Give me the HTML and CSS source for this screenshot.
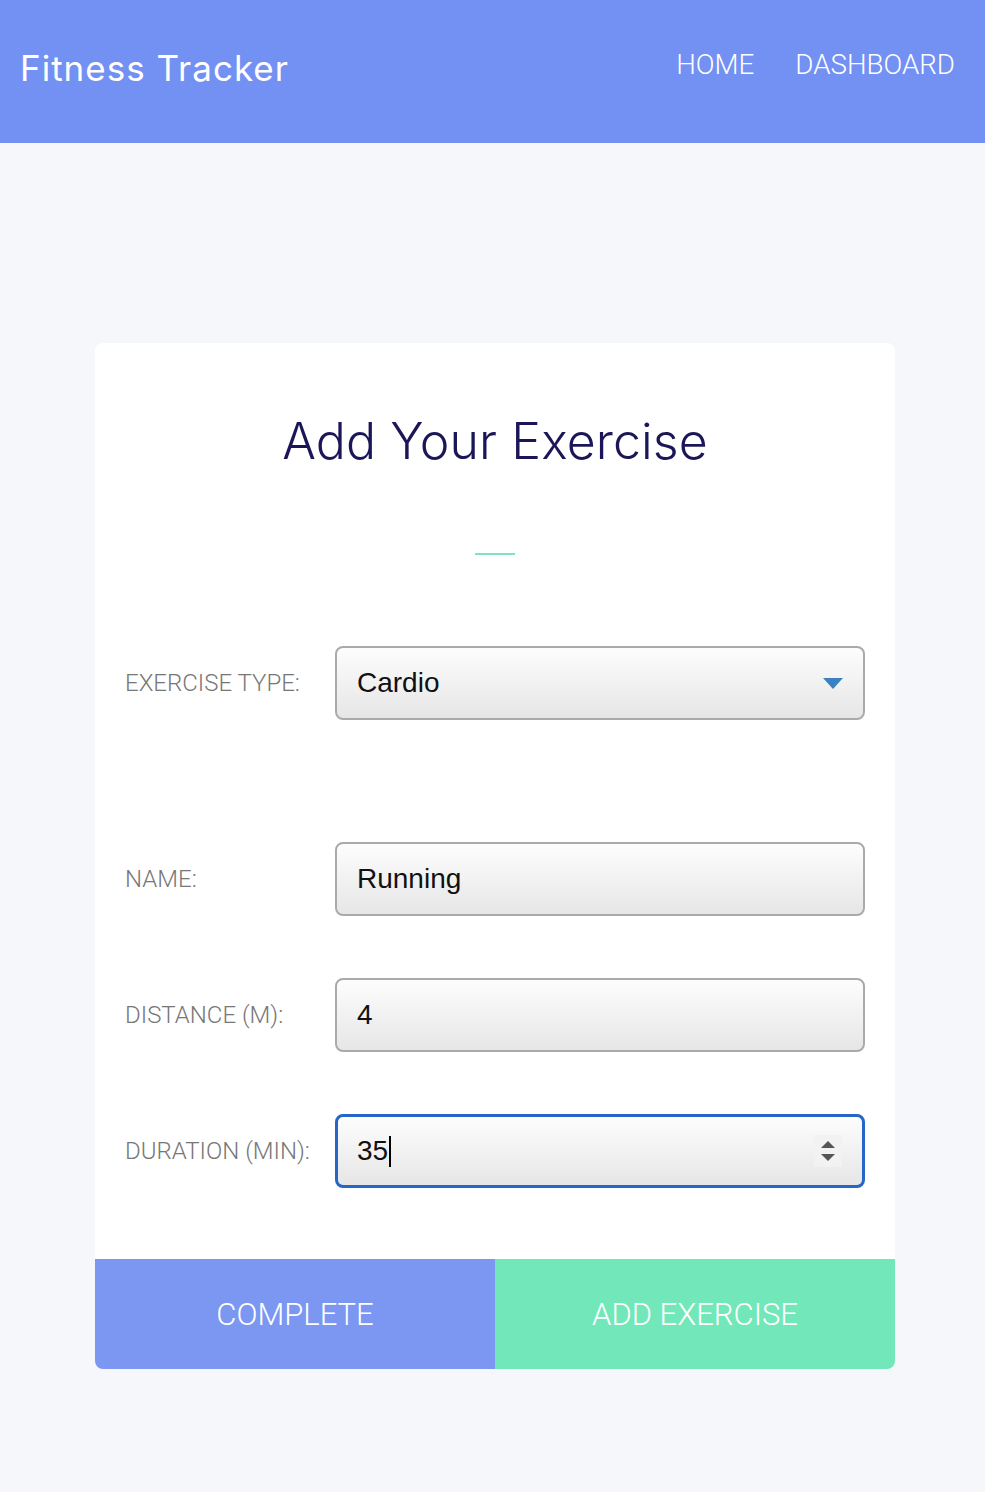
FILE: index.html
```html
<!DOCTYPE html>
<html>
<head>
<meta charset="utf-8">
<link rel="stylesheet" href="styles.css">
</head>
<body>
<header class="topbar">
  <div class="brand">Fitness Tracker</div>
  <nav class="nav">
    <a class="nav-link">HOME</a>
    <a class="nav-link">DASHBOARD</a>
  </nav>
</header>
<main class="page">
  <section class="card">
    <h1 class="card-title">Add Your Exercise</h1>
    <div class="divider"></div>
    <div class="form">
      <div class="row row-type">
        <div class="label">EXERCISE TYPE:</div>
        <div class="field">
          <span class="value">Cardio</span>
          <svg class="arrow" width="20" height="11" viewBox="0 0 20 11"><path d="M0 0 L20 0 L10 11 Z" fill="#3b80c0"/></svg>
        </div>
      </div>
      <div class="row row-name">
        <div class="label">NAME:</div>
        <div class="field"><span class="value">Running</span></div>
      </div>
      <div class="row">
        <div class="label">DISTANCE (M):</div>
        <div class="field"><span class="value">4</span></div>
      </div>
      <div class="row">
        <div class="label">DURATION (MIN):</div>
        <div class="field focused">
          <span class="value">35</span><span class="caret"></span>
          <span class="spinner">
            <svg width="16" height="24" viewBox="0 0 16 24"><path d="M1 9 L8 2 L15 9 Z" fill="#555"/><path d="M1 15 L15 15 L8 22 Z" fill="#555"/></svg>
          </span>
        </div>
      </div>
    </div>
    <div class="actions">
      <button class="btn btn-complete">COMPLETE</button>
      <button class="btn btn-add">ADD EXERCISE</button>
    </div>
  </section>
</main>
</body>
</html>
```
FILE: styles.css
```css
* { box-sizing: border-box; }
html, body { margin: 0; padding: 0; }
body {
  background: #f6f7fb;
  font-family: Roboto, "Liberation Sans", sans-serif;
  min-height: 1492px;
}
.topbar {
  height: 143px;
  background: #7390f3;
  display: flex;
  justify-content: space-between;
  align-items: flex-start;
  padding: 0 30px 0 20px;
}
.brand {
  color: #fff;
  font-family: Inter, "Noto Sans", sans-serif;
  font-weight: 400;
  font-size: 35px;
  letter-spacing: 1px;
  margin-top: 45px;
  line-height: 46px;
}
.nav {
  display: flex;
  gap: 41px;
  margin-top: 45px;
}
.nav-link {
  color: #fff;
  font-family: Roboto, sans-serif;
  font-weight: 300;
  font-size: 27.7px;
  line-height: 40px;
}
.page {
  padding-top: 200px;
  padding-left: 5px;
  display: flex;
  justify-content: center;
}
.card {
  width: 800px;
  background: #fff;
  border-radius: 8px;
  overflow: hidden;
}
.card-title {
  margin: 0;
  padding-top: 68px;
  text-align: center;
  font-family: Inter, "Noto Sans", sans-serif;
  font-weight: 300;
  font-size: 50px;
  line-height: 60px;
  color: #1b1657;
  letter-spacing: 0.1px;
}
.divider {
  width: 40px;
  height: 2px;
  background: #7fe3bc;
  margin: 82px auto 0;
}
.form {
  padding: 91px 30px 71px 30px;
  display: flex;
  flex-direction: column;
  gap: 62px;
}
.row {
  display: flex;
  align-items: center;
}
.row-name { margin-top: 60px; }
.label {
  width: 210px;
  color: #777;
  font-family: Roboto, sans-serif;
  font-weight: 300;
  font-size: 24px;
}
.field {
  width: 530px;
  height: 74px;
  border: 2px solid #aaa;
  border-radius: 8px;
  background: linear-gradient(#fdfdfd, #e6e6e6);
  display: flex;
  align-items: center;
  padding: 0 20px;
  position: relative;
}
.value {
  font-family: "Liberation Sans", Arial, sans-serif;
  font-size: 28px;
  color: #111;
}
.arrow { margin-left: auto; }
.focused {
  border: 3px solid #2566c8;
  padding-left: 19px;
}
.caret {
  width: 2px;
  height: 31px;
  background: #000;
  margin-left: 1px;
}
.spinner {
  position: absolute;
  right: 20px;
  top: 18px;
  width: 28px;
  height: 32px;
  background: #f2f2f2;
  display: flex;
  align-items: center;
  justify-content: center;
}
.actions {
  display: flex;
  height: 110px;
}
.btn {
  flex: 1;
  border: none;
  margin: 0;
  color: #fff;
  font-family: Roboto, sans-serif;
  font-weight: 300;
  font-size: 31px;
  cursor: pointer;
}
.btn-complete { background: #7b97f2; }
.btn-add { background: #72e8ba; }
```
